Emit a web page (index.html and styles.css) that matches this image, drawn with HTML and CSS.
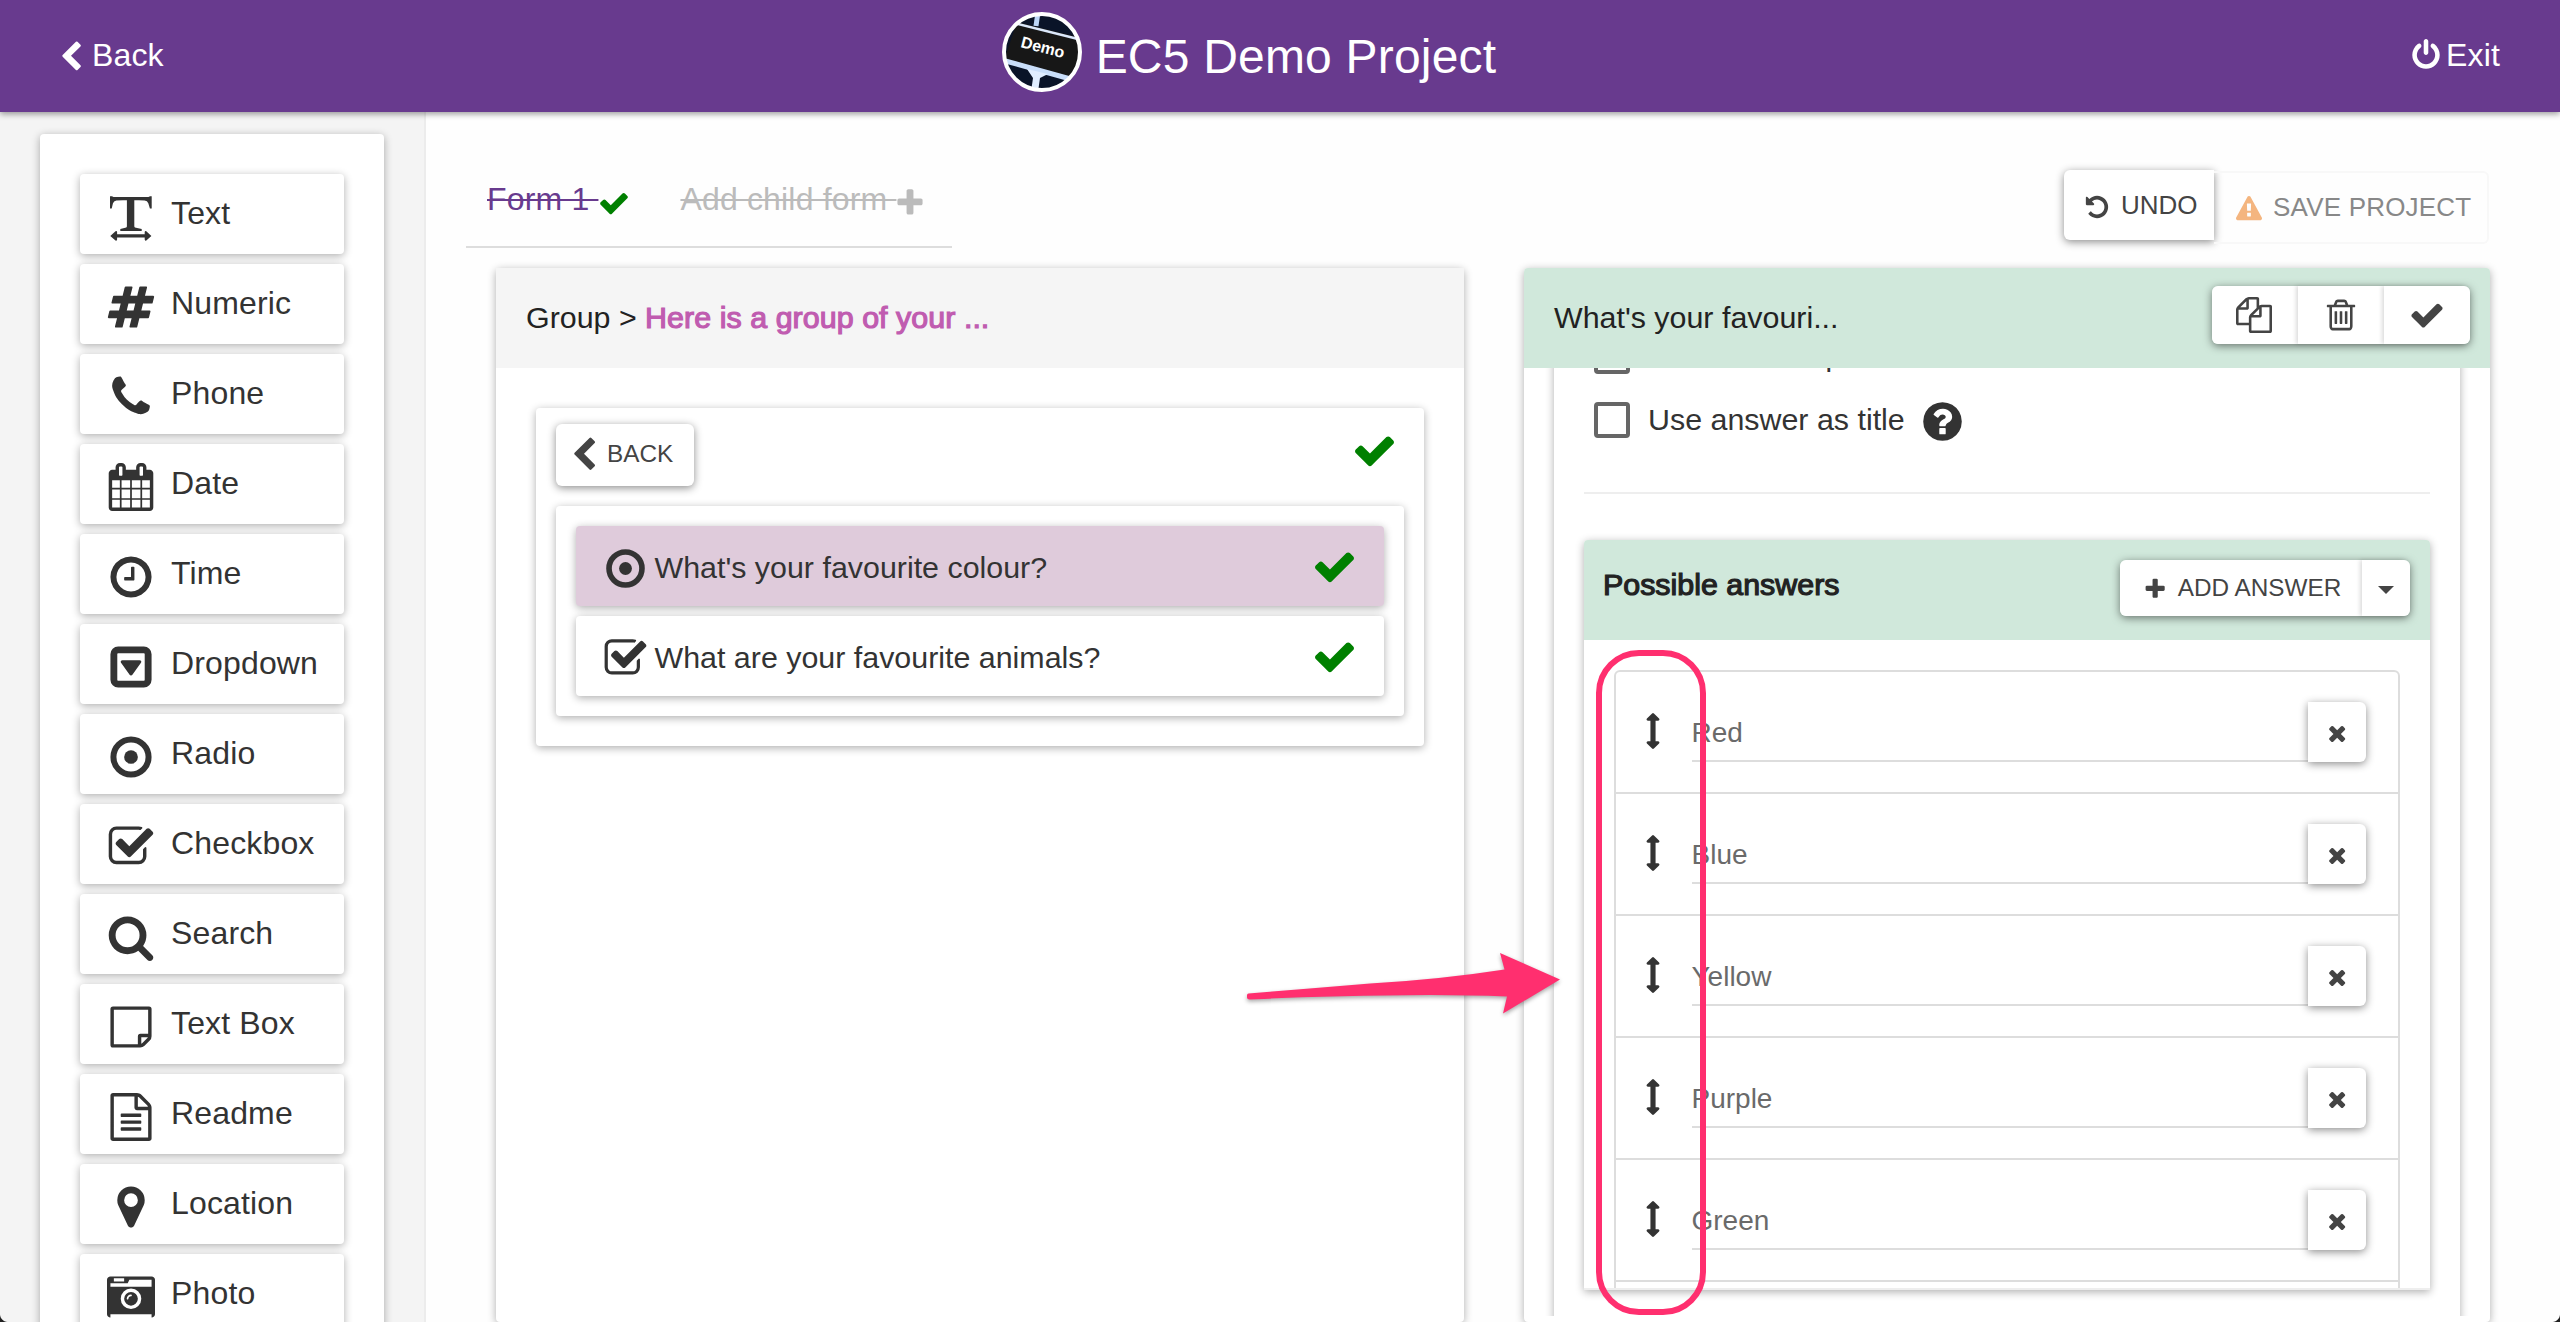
FILE: index.html
```html
<!DOCTYPE html>
<html lang="en">
<head>
<meta charset="utf-8">
<title>EC5 Demo Project</title>
<link rel="stylesheet" href="styles.css">
</head>
<body>
<svg class="sprite" aria-hidden="true">
  <symbol id="chevron-left" viewBox="0 0 1792 1792"><path d="M1427 301l-531 531 531 531q19 19 19 45t-19 45l-166 166q-19 19-45 19t-45-19l-742-742q-19-19-19-45t19-45l742-742q19-19 45-19t45 19l166 166q19 19 19 45t-19 45z"/></symbol>
  <symbol id="power-off" viewBox="0 0 1792 1792"><path d="M1664 896q0 156-61 298t-164 245-245 164-298 61-298-61-245-164-164-245-61-298q0-182 80.500-343t226.500-270q43-32 95.500-25t83.500 50q32 42 24.500 94.500t-49.500 84.500q-98 74-151.500 181t-53.500 228q0 104 40.500 198.500t109.500 163.500 163.500 109.500 198.500 40.500 198.500-40.500 163.500-109.500 109.500-163.500 40.500-198.500q0-121-53.500-228t-151.500-181q-42-32-49.500-84.500t24.500-94.500q31-43 84-50t95 25q146 109 226.500 270t80.500 343zm-640-768v640q0 52-38 90t-90 38-90-38-38-90v-640q0-52 38-90t90-38 90 38 38 90z"/></symbol>
  <symbol id="text-width" viewBox="0 0 48 48"><path d="M3 3.300h2l1.500.8h35l1.500-.8h1.700v12.200h-1.800l-1.600-5.200q-.9-2.700-3.700-2.900-5-.4-10.300-.1v26.300l.6 1 6.800 1.500v2h-21.400v-2l6-1.500.6-1v-26.300q-6-.3-10.600.3-2.700.3-3.400 2.900l-1.200 5h-1.700z"/><path d="M3.300 42.900l5.200-4.600q1.500-.7 1.600.9v2.100h27.600v-2.100q.1-1.600 1.600-.9l5.100 4.600-5.100 4.600q-1.500.7-1.600-.9v-2.100h-27.600v2.100q-.1 1.600-1.600.9z"/></symbol>
  <symbol id="hashtag" viewBox="0 0 1792 1792"><path d="M991 1024l64-256h-254l-64 256h254zm768-504l-56 224q-7 24-31 24h-327l-64 256h311q15 0 25 12 10 14 6 28l-56 224q-5 24-31 24h-327l-81 328q-7 24-31 24h-224q-16 0-26-12-9-12-6-28l78-312h-254l-81 328q-7 24-31 24h-225q-15 0-25-12-9-12-6-28l78-312h-311q-15 0-25-12-9-12-6-28l56-224q7-24 31-24h327l64-256h-311q-15 0-25-12-10-14-6-28l56-224q5-24 31-24h327l81-328q7-24 32-24h224q15 0 25 12 9 12 6 28l-78 312h254l81-328q7-24 32-24h224q15 0 25 12 9 12 6 28l-78 312h311q15 0 25 12 9 12 6 28z"/></symbol>
  <symbol id="phone" viewBox="0 0 1792 1792"><path d="M1600 1240q0 27-10 70.500t-21 68.500q-21 50-122 106-94 51-186 51-27 0-53-3.500t-57.500-12.500-47-14.500-55.500-20.500-49-18q-98-35-175-83-127-79-264-216t-216-264q-48-77-83-175-3-9-18-49t-20.500-55.500-14.500-47-12.500-57.500-3.500-53q0-92 51-186 56-101 106-122 25-11 68.500-21t70.500-10q14 0 21 3 18 6 53 76 11 19 30 54t35 63.500 31 53.500q3 4 17.500 25t21.500 35.500 7 28.500q0 20-28.500 50t-62 55-62 53-28.500 46q0 9 5 22.500t8.500 20.500 14 24 11.500 19q76 137 174 235t235 174q2 1 19 11.500t24 14 20.500 8.500 22.500 5q18 0 46-28.500t53-62 55-62 50-28.500q14 0 28.500 7t35.500 21.500 25 17.500q25 15 53.500 31t63.500 35 54 30q70 35 76 53 3 7 3 21z"/></symbol>
  <symbol id="calendar" viewBox="0 0 1792 1792"><path d="M192 1664h288v-288h-288v288zm352 0h320v-288h-320v288zm-352-352h288v-320h-288v320zm352 0h320v-320h-320v320zm-352-384h288v-288h-288v288zm736 736h320v-288h-320v288zm-384-736h320v-288h-320v288zm768 736h288v-288h-288v288zm-384-352h320v-320h-320v320zm-352-864v-288q0-13-9.500-22.500t-22.500-9.500h-64q-13 0-22.500 9.500t-9.500 22.500v288q0 13 9.500 22.500t22.500 9.500h64q13 0 22.500-9.500t9.500-22.500zm736 864h288v-320h-288v320zm-384-384h320v-288h-320v288zm384 0h288v-288h-288v288zm32-480v-288q0-13-9.500-22.500t-22.500-9.500h-64q-13 0-22.500 9.500t-9.500 22.500v288q0 13 9.500 22.500t22.500 9.500h64q13 0 22.500-9.500t9.500-22.500zm384-64v1280q0 52-38 90t-90 38h-1408q-52 0-90-38t-38-90v-1280q0-52 38-90t90-38h128v-96q0-66 47-113t113-47h64q66 0 113 47t47 113v96h384v-96q0-66 47-113t113-47h64q66 0 113 47t47 113v96h128q52 0 90 38t38 90z"/></symbol>
  <symbol id="clock" viewBox="0 0 1792 1792"><path d="M1024 544v448q0 14-9 23t-23 9h-320q-14 0-23-9t-9-23v-64q0-14 9-23t23-9h224v-352q0-14 9-23t23-9h64q14 0 23 9t9 23zm416 352q0-148-73-273t-198-198-273-73-273 73-198 198-73 273 73 273 198 198 273 73 273-73 198-198 73-273zm224 0q0 209-103 385.500t-279.500 279.500-385.500 103-385.500-103-279.500-279.500-103-385.500 103-385.500 279.500-279.500 385.500-103 385.500 103 279.500 279.500 103 385.500z"/></symbol>
  <symbol id="caret-square" viewBox="0 0 1792 1792"><path d="M1273 675q18 35-5 66l-320 448q-18 27-52 27t-52-27l-320-448q-23-31-5-66 17-35 57-35h640q40 0 57 35zm135 701v-960q0-13-9.500-22.500t-22.500-9.500h-960q-13 0-22.500 9.500t-9.500 22.500v960q0 13 9.500 22.500t22.500 9.500h960q13 0 22.500-9.500t9.500-22.500zm256-960v960q0 119-84.500 203.500t-203.500 84.500h-960q-119 0-203.500-84.500t-84.500-203.500v-960q0-119 84.500-203.500t203.500-84.500h960q119 0 203.500 84.500t84.500 203.500z"/></symbol>
  <symbol id="dot-circle" viewBox="0 0 1792 1792"><circle cx="896" cy="896" r="256"/><circle cx="896" cy="896" r="656" fill="none" stroke="currentColor" stroke-width="224"/></symbol>
  <symbol id="check-square" viewBox="0 0 1792 1792"><path d="M1472 930v318q0 119-84.500 203.500t-203.500 84.500h-832q-119 0-203.500-84.500t-84.500-203.500v-832q0-119 84.500-203.500t203.500-84.500h832q63 0 117 25 15 7 18 23 3 17-9 29l-49 49q-10 10-23 10-3 0-9-2-23-6-45-6h-832q-66 0-113 47t-47 113v832q0 66 47 113t113 47h832q66 0 113-47t47-113v-254q0-13 9-22l64-64q10-10 23-10 6 0 12 3 20 8 20 29zm231-489l-814 814q-24 24-57 24t-57-24l-430-430q-24-24-24-57t24-57l110-110q24-24 57-24t57 24l263 263 647-647q24-24 57-24t57 24l110 110q24 24 24 57t-24 57z"/></symbol>
  <symbol id="search" viewBox="0 0 1792 1792"><path d="M1216 832q0-185-131.500-316.500t-316.500-131.500-316.500 131.500-131.500 316.500 131.500 316.500 316.500 131.500 316.500-131.500 131.500-316.500zm512 832q0 52-38 90t-90 38q-54 0-90-38l-343-342q-179 124-399 124-143 0-273.500-55.500t-225-150-150-225-55.500-273.500 55.500-273.500 150-225 225-150 273.500-55.500 273.500 55.500 225 150 150 225 55.500 273.500q0 220-124 399l343 343q37 37 37 90z"/></symbol>
  <symbol id="sticky-note" viewBox="0 0 1792 1792"><path d="M192 224q0-32 32-32h1344q32 0 32 32v1016q0 68-48 116l-196 196q-48 48-116 48h-1016q-32 0-32-32zM1216 1600v-352q0-32 32-32h352" fill="none" stroke="currentColor" stroke-width="128"/></symbol>
  <symbol id="file-text" viewBox="0 0 1792 1792"><path d="M1596 380q28 28 48 76t20 88v1152q0 40-28 68t-68 28h-1344q-40 0-68-28t-28-68v-1600q0-40 28-68t68-28h896q40 0 88 20t76 48zm-444-244v376h376q-10-29-22-41l-313-313q-12-12-41-22zm384 1528v-1024h-416q-40 0-68-28t-28-68v-416h-768v1536h1280zm-1024-864q0-14 9-23t23-9h704q14 0 23 9t9 23v64q0 14-9 23t-23 9h-704q-14 0-23-9t-9-23v-64zm736 224q14 0 23 9t9 23v64q0 14-9 23t-23 9h-704q-14 0-23-9t-9-23v-64q0-14 9-23t23-9h704zm0 256q14 0 23 9t9 23v64q0 14-9 23t-23 9h-704q-14 0-23-9t-9-23v-64q0-14 9-23t23-9h704z"/></symbol>
  <symbol id="map-marker" viewBox="0 0 1792 1792"><path d="M1152 640q0-106-75-181t-181-75-181 75-75 181 75 181 181 75 181-75 75-181zm256 0q0 109-33 179l-364 774q-16 33-47.500 52t-67.500 19-67.500-19-46.500-52l-365-774q-33-70-33-179 0-212 150-362t362-150 362 150 150 362z"/></symbol>
  <symbol id="camera" viewBox="0 0 1792 1792"><path d="M928 832q0-14-9-23t-23-9q-66 0-113 47t-47 113q0 14 9 23t23 9 23-9 9-23q0-40 28-68t68-28q14 0 23-9t9-23zm224 130q0 106-75 181t-181 75-181-75-75-181 75-181 181-75 181 75 75 181zm-1024 702h1536v-128h-1536v128zm1152-702q0-159-112.500-271.500t-271.500-112.500-271.500 112.500-112.500 271.500 112.500 271.500 271.500 112.500 271.500-112.500 112.500-271.500zm-1024-642h384v-128h-384v128zm-128 192h1536v-256h-828l-64 128h-644v128zm1664-256v1280q0 53-37.500 90.500t-90.500 37.500h-1536q-53 0-90.500-37.500t-37.500-90.500v-1280q0-53 37.500-90.500t90.500-37.500h1536q53 0 90.500 37.500t37.500 90.500z" fill-rule="evenodd"/></symbol>
  <symbol id="check" viewBox="0 0 1792 1792"><path d="M1671 566q0 40-28 68l-724 724-136 136q-28 28-68 28t-68-28l-136-136-362-362q-28-28-28-68t28-68l136-136q28-28 68-28t68 28l294 295 656-657q28-28 68-28t68 28l136 136q28 28 28 68z"/></symbol>
  <symbol id="plus" viewBox="0 0 1792 1792"><path d="M1600 736v192q0 40-28 68t-68 28h-416v416q0 40-28 68t-68 28h-192q-40 0-68-28t-28-68v-416h-416q-40 0-68-28t-28-68v-192q0-40 28-68t68-28h416v-416q0-40 28-68t68-28h192q40 0 68 28t28 68v416h416q40 0 68 28t28 68z"/></symbol>
  <symbol id="times" viewBox="0 0 1792 1792"><path d="M1490 1322q0 40-28 68l-136 136q-28 28-68 28t-68-28l-294-294-294 294q-28 28-68 28t-68-28l-136-136q-28-28-28-68t28-68l294-294-294-294q-28-28-28-68t28-68l136-136q28-28 68-28t68 28l294 294 294-294q28-28 68-28t68 28l136 136q28 28 28 68t-28 68l-294 294 294 294q28 28 28 68z"/></symbol>
  <symbol id="undo" viewBox="0 0 1792 1792"><path d="M1664 896q0 156-61 298t-164 245-245 164-298 61q-172 0-327-72.500t-264-204.500q-7-10-6.500-22.500t8.500-20.500l137-138q10-9 25-9 16 2 23 12 73 95 179 147t225 52q104 0 198.500-40.500t163.500-109.500 109.500-163.500 40.500-198.500-40.500-198.500-109.500-163.500-163.500-109.500-198.500-40.500q-98 0-188 35.500t-160 101.500l137 138q31 30 14 69-17 40-59 40h-448q-26 0-45-19t-19-45v-448q0-42 40-59 39-17 69 14l130 129q107-101 244.500-156.500t284.500-55.500q156 0 298 61t245 164 164 245 61 298z"/></symbol>
  <symbol id="warning" viewBox="0 0 1792 1792"><path d="M1024 1375v-190q0-14-9.500-23.500t-22.500-9.500h-192q-13 0-22.500 9.500t-9.500 23.500v190q0 14 9.500 23.500t22.500 9.500h192q13 0 22.500-9.500t9.500-23.500zm-2-374l18-459q0-12-10-19-13-11-24-11h-220q-11 0-24 11-10 7-10 21l17 457q0 10 10 16.500t24 6.500h185q14 0 23.500-6.500t10.500-16.500zm-14-934l768 1408q35 63-2 126-17 29-46.500 46t-63.500 17h-1536q-34 0-63.500-17t-46.500-46q-37-63-2-126l768-1408q17-31 47-49t65-18 65 18 47 49z"/></symbol>
  <symbol id="files" viewBox="0 0 1792 1792"><path d="M1696 384q40 0 68 28t28 68v1216q0 40-28 68t-68 28h-960q-40 0-68-28t-28-68v-288h-544q-40 0-68-28t-28-68v-672q0-40 20-88t48-76l408-408q28-28 76-48t88-20h416q40 0 68 28t28 68v328q68-40 128-40h416zm-544 213l-299 299h299v-299zm-640-384l-299 299h299v-299zm196 647l316-316v-416h-384v416q0 40-28 68t-68 28h-416v640h512v-256q0-40 20-88t48-76zm956 804v-1152h-384v416q0 40-28 68t-68 28h-416v640h896z"/></symbol>
  <symbol id="trash" viewBox="0 0 1792 1792"><path d="M704 736v576q0 14-9 23t-23 9h-64q-14 0-23-9t-9-23v-576q0-14 9-23t23-9h64q14 0 23 9t9 23zm256 0v576q0 14-9 23t-23 9h-64q-14 0-23-9t-9-23v-576q0-14 9-23t23-9h64q14 0 23 9t9 23zm256 0v576q0 14-9 23t-23 9h-64q-14 0-23-9t-9-23v-576q0-14 9-23t23-9h64q14 0 23 9t9 23zm128 724v-948h-896v948q0 22 7 40.500t14.500 27 10.500 8.500h832q3 0 10.500-8.500t14.500-27 7-40.500zm-672-1076h448l-48-117q-7-9-17-11h-317q-10 2-17 11zm928 32v64q0 14-9 23t-23 9h-96v948q0 83-47 143.500t-113 60.500h-832q-66 0-113-58.500t-47-141.500v-952h-96q-14 0-23-9t-9-23v-64q0-14 9-23t23-9h309l70-167q15-37 54-63t79-26h320q40 0 79 26t54 63l70 167h309q14 0 23 9t9 23z"/></symbol>
  <symbol id="question" viewBox="0 0 1792 1792"><path d="M1024 1376v-192q0-14-9-23t-23-9h-192q-14 0-23 9t-9 23v192q0 14 9 23t23 9h192q14 0 23-9t9-23zm256-672q0-88-55.500-163t-138.500-116-170-41q-243 0-371 213-15 24 8 42l132 100q7 6 19 6 16 0 25-12 53-68 86-92 34-24 86-24 48 0 85.500 26t37.500 59q0 38-20 61t-68 45q-63 28-115.500 86.500t-52.500 125.500v36q0 14 9 23t23 9h192q14 0 23-9t9-23q0-19 21.500-49.500t54.500-49.500q32-18 49-28.500t46-35 44.500-48 28-60.500 12.500-81zm384 192q0 209-103 385.500t-279.500 279.500-385.500 103-385.500-103-279.500-279.500-103-385.500 103-385.500 279.500-279.500 385.500-103 385.500 103 279.500 279.500 103 385.500z"/></symbol>
  <symbol id="arrows-v" viewBox="0 0 1792 1792"><path d="M1216 320q0 26-19 45t-45 19h-128v1024h128q26 0 45 19t19 45-19 45l-256 256q-19 19-45 19t-45-19l-256-256q-19-19-19-45t19-45 45-19h128v-1024h-128q-26 0-45-19t-19-45 19-45l256-256q19-19 45-19t45 19l256 256q19 19 19 45z"/></symbol>
</svg>

<header class="topbar">
  <a class="nav-back"><svg class="icon"><use href="#chevron-left"/></svg><span>Back</span></a>
  <div class="brand">
    <svg class="logo" viewBox="0 0 80 80">
      <defs><clipPath id="disc"><circle cx="40" cy="40" r="38"/></clipPath></defs>
      <g clip-path="url(#disc)">
        <rect width="80" height="80" fill="#0a1428"/>
        <path d="M15 10L80 26V69L2 48z" fill="#171717"/>
        <path d="M36 0L34 14" stroke="#bcd6f8" stroke-width="5" fill="none"/>
        <path d="M12 11L76 27" stroke="#dbe8fb" stroke-width="2.500"/>
        <path d="M0 48L72 68" stroke="#c9defa" stroke-width="5"/>
        <path d="M25 57L46 62L38 66L36 80H29L31 66z" fill="#e0edff"/>
        <text class="logo-text" x="18" y="35" transform="rotate(14.500 18 35)">Demo</text>
      </g>
      <circle cx="40" cy="40" r="38" fill="none" stroke="#fff" stroke-width="4"/>
    </svg>
    <h1>EC5 Demo Project</h1>
  </div>
  <a class="nav-exit"><svg class="icon"><use href="#power-off"/></svg><span>Exit</span></a>
</header>

<div class="workspace">
  <aside class="sidebar">
    <ul class="inputs">
      <li><svg class="icon"><use href="#text-width"/></svg><span>Text</span></li>
      <li><svg class="icon"><use href="#hashtag"/></svg><span>Numeric</span></li>
      <li><svg class="icon"><use href="#phone"/></svg><span>Phone</span></li>
      <li><svg class="icon"><use href="#calendar"/></svg><span>Date</span></li>
      <li><svg class="icon"><use href="#clock"/></svg><span>Time</span></li>
      <li><svg class="icon"><use href="#caret-square"/></svg><span>Dropdown</span></li>
      <li><svg class="icon"><use href="#dot-circle"/></svg><span>Radio</span></li>
      <li><svg class="icon"><use href="#check-square"/></svg><span>Checkbox</span></li>
      <li><svg class="icon"><use href="#search"/></svg><span>Search</span></li>
      <li><svg class="icon"><use href="#sticky-note"/></svg><span>Text Box</span></li>
      <li><svg class="icon"><use href="#file-text"/></svg><span>Readme</span></li>
      <li><svg class="icon"><use href="#map-marker"/></svg><span>Location</span></li>
      <li><svg class="icon"><use href="#camera"/></svg><span>Photo</span></li>
    </ul>
  </aside>

  <main class="main">
    <div class="toolbar">
      <nav class="tabs">
        <a class="tab tab-active"><span>Form 1 </span><svg class="icon green"><use href="#check"/></svg></a>
        <a class="tab"><span>Add child form </span><svg class="icon"><use href="#plus"/></svg></a>
      </nav>
      <div class="actions">
        <button class="btn btn-undo"><svg class="icon"><use href="#undo"/></svg><span>UNDO</span></button>
        <button class="btn btn-save"><svg class="icon"><use href="#warning"/></svg><span>SAVE PROJECT</span></button>
      </div>
    </div>

    <div class="panels">
      <section class="panel panel-group">
        <div class="panel-head"><span class="crumb">Group &gt; <b>Here is a group of your ...</b></span></div>
        <div class="group-card">
          <div class="group-top">
            <button class="btn btn-back"><svg class="icon"><use href="#chevron-left"/></svg><span>BACK</span></button>
            <svg class="icon green"><use href="#check"/></svg>
          </div>
          <ul class="questions">
            <li class="selected"><svg class="icon"><use href="#dot-circle"/></svg><span>What's your favourite colour?</span><svg class="icon green"><use href="#check"/></svg></li>
            <li><svg class="icon"><use href="#check-square"/></svg><span>What are your favourite animals?</span><svg class="icon green"><use href="#check"/></svg></li>
          </ul>
        </div>
      </section>

      <section class="panel panel-edit">
        <div class="panel-head mint">
          <span class="crumb">What's your favouri...</span>
          <div class="btn-group head-tools">
            <button class="btn"><svg class="icon"><use href="#files"/></svg></button>
            <button class="btn"><svg class="icon"><use href="#trash"/></svg></button>
            <button class="btn"><svg class="icon"><use href="#check"/></svg></button>
          </div>
        </div>
        <div class="edit-body">
          <div class="edit-card">
            <label class="option"><i class="box"></i><span>Answer is required</span></label>
            <label class="option"><i class="box"></i><span>Use answer as title</span><svg class="icon"><use href="#question"/></svg></label>
            <hr>
            <div class="answers">
              <div class="answers-head">
                <h2>Possible answers</h2>
                <div class="btn-group">
                  <button class="btn btn-add"><svg class="icon"><use href="#plus"/></svg><span>ADD ANSWER</span></button>
                  <button class="btn btn-caret"><i class="caret"></i></button>
                </div>
              </div>
              <div class="answers-body">
                <ul class="answer-list">
                  <li><svg class="icon"><use href="#arrows-v"/></svg><div class="field">Red</div><button class="btn btn-remove"><svg class="icon"><use href="#times"/></svg></button></li>
                  <li><svg class="icon"><use href="#arrows-v"/></svg><div class="field">Blue</div><button class="btn btn-remove"><svg class="icon"><use href="#times"/></svg></button></li>
                  <li><svg class="icon"><use href="#arrows-v"/></svg><div class="field">Yellow</div><button class="btn btn-remove"><svg class="icon"><use href="#times"/></svg></button></li>
                  <li><svg class="icon"><use href="#arrows-v"/></svg><div class="field">Purple</div><button class="btn btn-remove"><svg class="icon"><use href="#times"/></svg></button></li>
                  <li><svg class="icon"><use href="#arrows-v"/></svg><div class="field">Green</div><button class="btn btn-remove"><svg class="icon"><use href="#times"/></svg></button></li>
                  <li></li>
                </ul>
              </div>
            </div>
          </div>
        </div>
      </section>
    </div>
  </main>
</div>

<!-- annotation layer -->
<div class="highlight"></div>
<svg class="pointer" viewBox="0 0 320 68"><path d="M8.500 48.500Q7 48.500 7 50.500V52.500Q7 54.500 9.500 54.500Q90 50.500 190 50Q230 50 267 51.500L263 68.500L320 34.500L260 8L264.500 24.500Q200 34.500 130 38.500Q70 43.500 8.500 48.500z"/></svg>
<i class="corner corner-left"></i>
<i class="corner corner-right"></i>
</body>
</html>
```

FILE: styles.css
```css
* { box-sizing: border-box; }

body {
  margin: 0;
  height: 1322px;
  overflow: hidden;
  position: relative;
  background: #fefefe;
  color: #333;
  font-family: "Liberation Sans", Arial, sans-serif;
  font-size: 30.4px;
}

ul { margin: 0; padding: 0; list-style: none; }
h1, h2 { margin: 0; font-weight: normal; }

.sprite { display: none; }

.icon {
  display: block;
  flex: none;
  width: 1em;
  height: 1em;
  fill: currentColor;
}

.green { color: #008000; }

/* top bar */
.topbar {
  position: relative;
  z-index: 2;
  display: grid;
  grid-template-columns: 1fr auto 1fr;
  align-items: center;
  height: 112px;
  padding: 0 60px 0 55px;
  background: #683a8e;
  color: #fff;
  font-size: 32px;
  line-height: 36px;
  letter-spacing: .15px;
  box-shadow: 0 2px 6px rgba(0, 0, 0, .4);
}

.nav-back, .nav-exit, .brand { display: flex; align-items: center; }
.nav-back { gap: 5px; }
.nav-back .icon { margin-top: 1px; }
.nav-back span, .nav-exit span { margin-bottom: 2px; }
.nav-exit { gap: 4px; justify-content: flex-end; }
.nav-exit .icon { margin-bottom: 3px; }
.brand { gap: 14px; margin-right: 57px; }
.brand h1 { margin-top: 1px; font-size: 48px; line-height: 54px; letter-spacing: .2px; }
.logo { width: 80px; height: 80px; margin-bottom: 8px; }
.logo-text { font-size: 16px; font-weight: bold; letter-spacing: 0; fill: #fff; }

/* sidebar */
.workspace { display: flex; height: 1210px; }

.sidebar {
  flex: none;
  width: 426px;
  height: 1210px;
  padding: 22px 40px 0;
  overflow: hidden;
  background: #f4f4f4;
  border-right: 2px solid #ececec;
}

.inputs {
  display: flex;
  flex-direction: column;
  gap: 10px;
  height: 1260px;
  padding: 40px;
  background: #fff;
  border-radius: 4px;
  box-shadow: 0 2px 8px rgba(0, 0, 0, .32);
}

.inputs li {
  display: flex;
  flex: none;
  align-items: center;
  gap: 16px;
  height: 80px;
  padding-left: 27px;
  background: #fff;
  border-radius: 4px;
  font-size: 32px;
  line-height: 36px;
  letter-spacing: .15px;
  box-shadow: 0 2px 8px rgba(0, 0, 0, .32);
}

.inputs .icon { width: 48px; height: 48px; margin-top: 5.6px; }
.inputs span { margin-bottom: 2px; }

/* toolbar */
.main { flex: 1; padding: 0 70px 0 40px; }

.toolbar {
  display: flex;
  justify-content: space-between;
  align-items: flex-start;
  height: 156px;
}

.tabs {
  display: flex;
  gap: 50px;
  width: 486px;
  height: 136px;
  padding: 69px 0 0 21px;
  border-bottom: 2px solid #ddd;
  font-size: 32px;
  line-height: 36px;
  letter-spacing: .17px;
}

.tab { display: flex; height: 36px; align-items: center; white-space: pre; color: #bbb; }
.tab span { text-decoration: line-through; text-decoration-thickness: 2px; }
.tab .icon { margin-top: 7px; }
.tab:last-child .icon { margin-left: -2px; }
.tab-active { color: #683a8e; }

.actions { display: flex; padding: 58px 1px 0 0; }

.btn {
  display: flex;
  align-items: center;
  margin: 0;
  padding: 0;
  border: 0;
  background: #fff;
  color: #444;
  font-family: inherit;
  font-size: 24.32px;
  line-height: 28px;
  white-space: nowrap;
  box-shadow: 0 2px 8px rgba(0, 0, 0, .45);
}

.btn-undo { width: 150px; height: 70px; padding-left: 20px; gap: 11px; border-radius: 6px 0 0 6px; font-size: 26px; }
.btn-undo .icon { margin-top: 3px; }

.btn-save {
  width: 275px;
  height: 73px;
  margin-top: 1px;
  padding-left: 22px;
  gap: 11px;
  border: 2px solid #f8f8f8;
  border-left: 0;
  border-radius: 0 6px 6px 0;
  background: none;
  color: #888;
  font-size: 26px;
  letter-spacing: .2px;
  box-shadow: none;
}

.btn-save span { margin-bottom: 1px; }
.btn-save .icon { margin-top: 3px; color: #f4b57f; }

/* panels */
.panels { display: flex; gap: 60px; height: 1054px; padding-left: 30px; }

.panel {
  background: #fff;
  border-radius: 4px;
  box-shadow: 0 2px 8px rgba(0, 0, 0, .32);
}

.panel-group { width: 968px; }
.panel-edit { width: 966px; }

.panel-head {
  display: flex;
  justify-content: space-between;
  align-items: center;
  height: 100px;
  padding: 0 20px 0 30px;
  background: #f5f5f5;
  color: #222;
  line-height: 34px;
}

.crumb { margin-bottom: 2px; }
.crumb b { font-weight: normal; color: #c05cb0; letter-spacing: .05px; -webkit-text-stroke: 1.200px #c05cb0; }
.mint { background: #d0e8db; border-radius: 4px 4px 0 0; }

.group-card {
  height: 338px;
  margin: 40px;
  padding: 16px 20px 30px;
  border-radius: 4px;
  box-shadow: 0 2px 8px rgba(0, 0, 0, .32);
}

.group-top { display: flex; justify-content: space-between; align-items: center; height: 62px; margin-bottom: 20px; }
.group-top > .icon { width: 45px; height: 45px; margin: 0 7px 10px 0; }

.btn-back { width: 138px; height: 62px; padding-left: 10px; gap: 5px; border-radius: 6px; }
.btn-back .icon { width: 36px; height: 36px; }
.btn-back span { margin-bottom: 3px; }

.questions {
  display: flex;
  flex-direction: column;
  gap: 10px;
  padding: 20px;
  border-radius: 4px;
  box-shadow: 0 2px 8px rgba(0, 0, 0, .32);
}

.questions li {
  display: flex;
  align-items: center;
  gap: 7px;
  height: 80px;
  padding: 0 27px 0 26.5px;
  border-radius: 4px;
  line-height: 34px;
  background: #fff;
  box-shadow: 0 2px 8px rgba(0, 0, 0, .32);
}

.questions .selected { background: #dfcbdb; }
.questions span { flex: 1; margin-top: 2px; }
.questions .icon { width: 45px; height: 45px; margin-top: 4px; }
.questions .green { margin-top: 0; }

.btn-group {
  display: flex;
  border-radius: 6px;
  box-shadow: 0 2px 8px rgba(0, 0, 0, .5);
}

.btn-group .btn { box-shadow: none; }
.btn-group .btn + .btn { box-shadow: -2px 0 4px rgba(0, 0, 0, .14); }
.btn-group .btn:first-child { border-radius: 6px 0 0 6px; }
.btn-group .btn:last-child { border-radius: 0 6px 6px 0; }

.head-tools { margin-bottom: 6px; }
.head-tools .btn { width: 86px; height: 58px; justify-content: center; }
.head-tools .icon { width: 36px; height: 36px; }
.head-tools .btn:first-child .icon { margin-right: 2px; }

.edit-body { height: 948px; padding: 0 30px; overflow: hidden; }

.edit-card {
  height: 1100px;
  margin-top: -60px;
  padding: 30px;
  border-radius: 4px;
  box-shadow: 0 2px 8px rgba(0, 0, 0, .32);
}

.option { display: flex; align-items: center; height: 36px; margin-bottom: 28px; padding-left: 10px; line-height: 34px; }
.option span { margin: 0 15px 2px 18px; }
.option .icon { width: 45px; height: 45px; margin-top: 3.4px; }
.box { width: 36px; height: 36px; border: 4px solid #666; border-radius: 4px; }

hr { height: 2px; margin: 54px 0 46px; border: 0; background: #eee; }
.option:has(+ hr) { margin-bottom: 0; }

.answers {
  height: 750px;
  border-bottom: 2px solid #eee;
  border-radius: 4px 4px 0 0;
  box-shadow: 0 2px 8px rgba(0, 0, 0, .32);
}

.answers-head {
  display: flex;
  justify-content: space-between;
  align-items: center;
  height: 100px;
  padding: 0 20px 0 19px;
  border-radius: 4px 4px 0 0;
  background: #d0e8db;
  color: #222;
}

.answers-head h2 { margin-bottom: 12px; font-size: 30.4px; line-height: 34px; -webkit-text-stroke: 1.200px #222; }
.answers-head .btn-group { margin-bottom: 4px; }
.btn-add { width: 242px; height: 56px; padding-left: 23px; gap: 10.5px; }
.btn-add .icon { margin-top: 3px; }
.btn-caret { width: 48px; height: 56px; justify-content: center; }
.caret { margin-top: 4px; border: 8px solid transparent; border-top-color: #444; border-bottom: 0; }

.answers-body { height: 648px; padding: 30px 30px 0; overflow: hidden; }
.answer-list { border: 2px solid #ddd; border-radius: 6px; }

.answer-list li {
  display: flex;
  align-items: center;
  height: 122px;
  padding: 0 32px 0 19px;
  border-bottom: 2px solid #ddd;
}

.answer-list li > .icon { width: 36px; height: 36px; margin: 0 21px 2px 0; }

.field {
  flex: 1;
  height: 60px;
  padding-top: 15px;
  border-bottom: 2px solid #ddd;
  color: #6a6a6a;
  font-size: 28px;
  line-height: 31px;
  text-indent: -.5px;
}

.btn-remove { width: 58px; height: 60px; justify-content: center; border-radius: 0 6px 6px 0; }
.btn-remove .icon { margin-top: 3px; }

/* annotation layer */
.highlight {
  position: absolute;
  z-index: 3;
  left: 1596px;
  top: 650px;
  width: 110px;
  height: 665px;
  border: 6px solid #ff2f6f;
  border-radius: 43px;
}

.pointer {
  position: absolute;
  z-index: 3;
  left: 1240px;
  top: 945px;
  width: 320px;
  height: 68px;
  overflow: visible;
  fill: #ff2f6f;
  filter: drop-shadow(0 2px 2px rgba(0, 0, 0, .35));
}

.corner { position: absolute; z-index: 4; bottom: 0; width: 8px; height: 8px; }
.corner-left { left: 0; background: radial-gradient(circle at 100% 0, transparent 7.500px, #222 8.500px); }
.corner-right { right: 0; background: radial-gradient(circle at 0 0, transparent 7.500px, #222 8.500px); }
```
